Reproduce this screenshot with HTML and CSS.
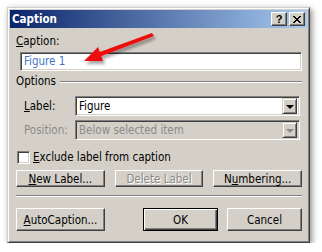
FILE: index.html
```html
<!DOCTYPE html>
<html lang="en">

<head>
     <meta charset="UTF-8">
     <title>Caption</title>
     <link rel="stylesheet" href="styles.css">
</head>

<body>
     <div class="dialog">
          <div class="titlebar">
               <span class="title">Caption</span>
               <div class="title-buttons">
                    <span class="tbtn help">?</span>
                    <span class="tbtn">
                         <svg width="8" height="7" viewBox="0 0 8 7">
                              <path d="M0 0h2v1H0z M6 0h2v1H6z M1 1h2v1H1z M5 1h2v1H5z M2 2h4v1H2z M3 3h2v1H3z M2 4h4v1H2z M1 5h2v1H1z M5 5h2v1H5z M0 6h2v1H0z M6 6h2v1H6z" fill="#000" />
                         </svg>
                    </span>
               </div>
          </div>

          <div class="content">
               <div class="field-label"><u>C</u>aption:</div>
               <div class="edit">Figure 1</div>

               <div class="group">Options</div>

               <div class="row">
                    <span class="row-label"><u>L</u>abel:</span>
                    <div class="combo">
                         <span class="combo-text">Figure</span>
                         <span class="drop"><i class="tri"></i></span>
                    </div>
               </div>
               <div class="row disabled">
                    <span class="row-label">Position:</span>
                    <div class="combo">
                         <span class="combo-text">Below selected item</span>
                         <span class="drop"><i class="tri"></i></span>
                    </div>
               </div>

               <div class="check">
                    <span class="box"></span>
                    <span><u>E</u>xclude label from caption</span>
               </div>

               <div class="btn-row">
                    <span class="btn"><u>N</u>ew Label...</span>
                    <span class="btn off">Delete Label</span>
                    <span class="btn">N<u>u</u>mbering...</span>
               </div>

               <div class="sep"></div>

               <div class="btn-row bottom">
                    <span class="btn auto"><u>A</u>utoCaption...</span>
                    <span class="btn ok">OK</span>
                    <span class="btn cancel">Cancel</span>
               </div>
          </div>
     </div>

     <!-- red annotation arrow drawn over the screenshot -->
     <svg class="arrow" width="322" height="252" viewBox="0 0 322 252">
          <defs>
               <filter id="shade" x="-20%" y="-40%" width="140%" height="180%">
                    <feDropShadow dx="2" dy="3" stdDeviation="1.6" flood-color="#000" flood-opacity="0.35" />
               </filter>
          </defs>
          <g filter="url(#shade)">
               <path d="M152 33 L154 36 L99 57 L97 53 Z" fill="#ee1111" />
               <path d="M84 61 L103 61 L98 47 Z" fill="#ee1111" />
          </g>
     </svg>
</body>

</html>
```

FILE: styles.css
```css
body {
     margin: 0;
     background-color: #fff;
     font-family: "DejaVu Sans Condensed", "Liberation Sans", sans-serif;
     font-size: 11.5px;
     color: #000;
}

.dialog {
     margin: 7px 0 0 7px;
     width: 303px;
     box-sizing: border-box;
     background-color: #d4d0c8;
     border: 1px solid;
     border-color: #d4d0c8 #404040 #404040 #d4d0c8;
     box-shadow: inset 1px 1px #fff, inset -1px -1px #808080, 2px 2px 6px rgba(0, 0, 0, 0.45);
     padding: 2px;
}

.titlebar {
     height: 18px;
     display: flex;
     align-items: center;
     justify-content: space-between;
     padding-left: 2px;
     background: linear-gradient(to right, #0a246a, #a6caf0);
     color: #fff;
     font-weight: bold;
}

.title-buttons {
     display: flex;
     gap: 2px;
     margin-right: 2px;
}

.tbtn {
     width: 16px;
     height: 14px;
     box-sizing: border-box;
     display: flex;
     align-items: center;
     justify-content: center;
     background-color: #d4d0c8;
     border: 1px solid;
     border-color: #fff #404040 #404040 #fff;
     box-shadow: inset -1px -1px #808080;
     color: #000;
     font-family: "Liberation Sans", sans-serif;
     font-size: 11px;
     font-weight: bold;
}

.content {
     padding: 7px 5px 9px 6px;
}

.field-label {
     line-height: 13px;
}

.edit {
     margin: 4px 0 0 4px;
     height: 19px;
     box-sizing: border-box;
     background-color: #fff;
     border: 1px solid;
     border-color: #808080 #fff #fff #808080;
     box-shadow: inset 1px 1px #404040, inset -1px -1px #d4d0c8;
     padding: 0 3px;
     line-height: 17px;
     color: #3f76c6;
}

.group {
     display: flex;
     align-items: center;
     margin-top: 4px;
     line-height: 13px;
}

.group::after {
     content: "";
     flex: 1;
     margin-left: 4px;
     border-top: 1px solid #808080;
     border-bottom: 1px solid #fff;
}

.row {
     display: flex;
     align-items: center;
     justify-content: space-between;
     margin-top: 8px;
}

.row + .row {
     margin-top: 4px;
}

.row-label {
     padding-left: 8px;
}

.combo {
     width: 225px;
     height: 20px;
     margin-right: 2px;
     box-sizing: border-box;
     display: flex;
     align-items: center;
     background-color: #fff;
     border: 1px solid;
     border-color: #808080 #fff #fff #808080;
     box-shadow: inset 1px 1px #404040, inset -1px -1px #d4d0c8;
     padding: 2px 2px 2px 3px;
}

.combo-text {
     flex: 1;
}

.drop {
     width: 15px;
     height: 16px;
     box-sizing: border-box;
     display: flex;
     align-items: center;
     justify-content: center;
     background-color: #d4d0c8;
     border: 1px solid;
     border-color: #d4d0c8 #404040 #404040 #d4d0c8;
     box-shadow: inset 1px 1px #fff, inset -1px -1px #808080;
}

.tri {
     width: 0;
     height: 0;
     border-left: 4px solid transparent;
     border-right: 4px solid transparent;
     border-top: 4px solid #000;
     margin-top: 1px;
}

.disabled {
     color: #8a8a8a;
}

.disabled .combo {
     background-color: #d4d0c8;
}

.disabled .tri {
     border-top-color: #8a8a8a;
}

.check {
     display: flex;
     align-items: center;
     gap: 3px;
     margin-top: 11px;
     padding-left: 1px;
     line-height: 13px;
}

.box {
     width: 13px;
     height: 13px;
     box-sizing: border-box;
     background-color: #fff;
     border: 1px solid;
     border-color: #808080 #fff #fff #808080;
     box-shadow: inset 1px 1px #404040, inset -1px -1px #d4d0c8;
}

.btn-row {
     display: grid;
     grid-template-columns: repeat(3, 1fr);
     gap: 10px;
     margin-top: 6px;
}

.btn {
     height: 17px;
     box-sizing: border-box;
     display: flex;
     align-items: center;
     justify-content: center;
     background-color: #d4d0c8;
     border: 1px solid;
     border-color: #fff #404040 #404040 #fff;
     box-shadow: inset -1px -1px #808080;
}

.btn.off {
     color: #8a8a8a;
     text-shadow: 1px 1px #fff;
}

.sep {
     margin-top: 8px;
     border-top: 1px solid #808080;
     border-bottom: 1px solid #fff;
}

.btn-row.bottom {
     display: flex;
     gap: 9px;
     margin-top: 11px;
}

.bottom .btn {
     height: 23px;
}

.bottom .auto {
     width: 89px;
     margin-right: auto;
}

.bottom .ok,
.bottom .cancel {
     width: 75px;
}

.bottom .ok {
     border: 1px solid #000;
     box-shadow: inset 1px 1px #fff, inset -1px -1px #404040, inset -2px -2px #808080;
}

.arrow {
     position: absolute;
     top: 0;
     left: 0;
     pointer-events: none;
}
```
